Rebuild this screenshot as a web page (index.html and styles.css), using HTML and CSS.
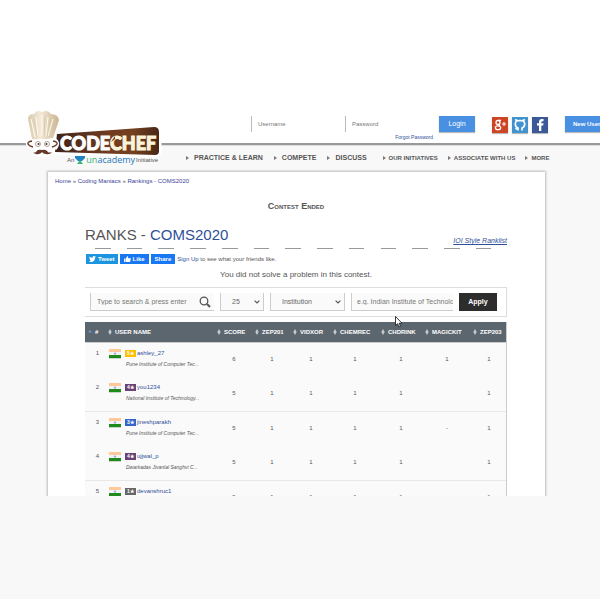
FILE: index.html
```html
<!DOCTYPE html>
<html lang="en">
<head>
<meta charset="utf-8">
<title>Ranks - COMS2020 | CodeChef</title>
<link rel="stylesheet" href="styles.css">
</head>
<body>
<svg class="defs" aria-hidden="true">
  <symbol id="sort" viewBox="0 0 4 7"><path d="M2 0 4 3.500 2 7 0 3.500z" fill="#c3c8cb"/></symbol>
  <symbol id="sort-up" viewBox="0 0 4 7"><path d="M2 1 4 4H0z" fill="#7f8fe0"/></symbol>
  <symbol id="chev" viewBox="0 0 6 4"><path d="M.6.6 3 3 5.400.6" fill="none" stroke="#555" stroke-width="1.1"/></symbol>
  <symbol id="flag" viewBox="0 0 12 10"><path d="M0 0h12v10H0z" fill="#f1f2f5"/><path d="M0 0h12v3H0z" fill="#ffc896"/><path d="M0 6h12v3H0z" fill="#1f8a1c"/><path d="M0 9h12v1H0z" fill="#c9d3c9"/><circle cx="6" cy="4.600" r="1.200" fill="#a9aed6"/></symbol>
</svg>
<div class="screen">
  <header class="header">
    <a class="logo" href="#" aria-label="CodeChef home">
      <svg viewBox="0 0 140 58" width="140" height="58">
        <defs>
          <linearGradient id="wood" x1="0" x2="1"><stop offset="0" stop-color="#3f2418"/><stop offset=".5" stop-color="#703b20"/><stop offset=".75" stop-color="#74401f"/><stop offset="1" stop-color="#482718"/></linearGradient>
          <linearGradient id="hat" x1="0" x2="1"><stop offset="0" stop-color="#d8c9ac"/><stop offset=".4" stop-color="#f3ead8"/><stop offset="1" stop-color="#c9b490"/></linearGradient>
        </defs>
        <path d="M32 24 129 17q5 0 5 5v19q0 4-4 4L30 42z" fill="url(#wood)" stroke="#fff" stroke-width="5" stroke-linejoin="round"/>
        <path d="M32 24 129 17q5 0 5 5v19q0 4-4 4L30 42z" fill="url(#wood)"/>
        <path d="M5 27Q0 32 4 37q5 1 7 6 8 6 14 0 2-5 6-5 4-6-2-9z" fill="#fff" stroke="#fff" stroke-width="3"/>
        <path d="M7 29 3 9Q3 4 9 4q3-5 8-2 6-3 9 2 7 0 8 6-3 9-6 18-10 2-21 1z" fill="url(#hat)"/>
        <path d="m6 9 4 18M11 7l2 19M17 5v21M23 7l-2 19M28 9l-5 17" fill="none" stroke="#fffaf0" stroke-width="1"/>
        <path d="m9 9 3 18M20 6l-1 20M26 8l-4 18" fill="none" stroke="#d2c3a4" stroke-width=".700"/>
        <path d="M7 31q-5 1-4 3t5 3M28 31q5 1 4 3t-5 3" fill="none" stroke="#6c3b28" stroke-width="1.400"/>
        <circle cx="13" cy="34" r="2.500" fill="#fff" stroke="#a08a7a" stroke-width=".800"/><circle cx="22" cy="34" r="2.500" fill="#fff" stroke="#a08a7a" stroke-width=".800"/>
        <circle cx="13.500" cy="34" r="1" fill="#4b2a20"/><circle cx="21.500" cy="34" r="1" fill="#4b2a20"/>
        <path d="M17 40q-5-1-6 2-1 1-3 0 2 3 6 2 3-1 3-2 1 2 4 2 4 1 6-2-3 1-4 0-2-3-6-2z" fill="#65392a"/>
        <text x="35" y="40" class="logo-text">CODE<tspan class="logo-chef">CHEF</tspan></text>
        <path d="m90 26-4 6 4-3z" fill="#68371f"/>
      </svg>
    </a>
    <p class="tagline">An
      <svg viewBox="0 0 10 8" width="10" height="8"><path d="M0 0h10v2L7 5H3L0 2z" fill="#2182c4"/><path d="M5 4 8 8H2z" fill="#35b47c"/></svg>
      <b><span>un</span>academy</b> Initiative</p>
    <form class="login">
      <input class="field" type="text" placeholder="Username" aria-label="Username">
      <div class="pass">
        <input class="field" type="password" placeholder="Password" aria-label="Password">
        <a class="forgot" href="#">Forgot Password</a>
      </div>
      <button class="btn login-btn" type="button">Login</button>
      <div class="social">
        <a href="#" class="google" aria-label="Google"><svg viewBox="0 0 16 16"><g fill="none" stroke="#fff" stroke-width="1.300"><circle cx="6" cy="5.500" r="2"/><ellipse cx="6" cy="10.800" rx="2.700" ry="1.900"/><path d="M6 3.300h3M6.500 7.500l1.500 2"/><path d="M10 7h4M12 5v4" stroke-width="1"/></g></svg></a>
        <a href="#" class="github" aria-label="GitHub"><svg viewBox="0 0 16 16"><path d="M6 13.500v-2.500Q3.300 10 3.300 7q0-1.300.8-2.200L4 3l2 .8q2-.4 4 0l2-.8-.1 1.800q.8.900.8 2.200 0 3-2.700 4v2.500M6 12q-1.500.4-2.500-1" fill="none" stroke="#fff" stroke-width="1.600"/></svg></a>
        <a href="#" class="facebook" aria-label="Facebook"><svg viewBox="0 0 16 16"><path d="M7 14V8.500H5V6.300h2V5q0-3 3-3h1.500v2.200h-1q-1.200 0-1.200 1.100v1h2.200l-.3 2.200H9.300V14z" fill="#fff"/></svg></a>
      </div>
      <button class="btn new-user" type="button">New User</button>
    </form>
  </header>

  <nav class="nav">
    <div class="nav-main"><a href="#">PRACTICE &amp; LEARN</a><a href="#">COMPETE</a><a href="#">DISCUSS</a></div>
    <div class="nav-more"><a href="#">OUR INITIATIVES</a><a href="#">ASSOCIATE WITH US</a><a href="#">MORE</a></div>
  </nav>

  <main class="page">
    <p class="crumbs"><a href="#">Home</a> » <a href="#">Coding Maniacs</a> » <a href="#">Rankings - COMS2020</a></p>
    <h2 class="ended">Contest Ended</h2>
    <div class="content">
      <div class="title">
        <h1>RANKS - <a href="#">COMS2020</a></h1>
        <a class="ioi" href="#">IOI Style Ranklist</a>
      </div>
      <div class="dashes"></div>
      <div class="share">
        <a class="tweet" href="#"><svg viewBox="0 0 8 7" width="7" height="6"><path d="M8 1 7 2Q7 6 3 7 1 7 0 6q1.500 0 2-.7Q1 5 1 4 0 3 .5 2 .3 1 .7.500 2 2 4 2q0-2 1.700-2L7 .500z" fill="#fff"/></svg>Tweet</a>
        <a class="like" href="#"><svg viewBox="0 0 8 7" width="7" height="6"><path d="M0 3h1.500v4H0zM2 3l2-3q1 0 .7 2.500H8L7 7H2z" fill="#fff"/></svg>Like</a>
        <a class="like" href="#">Share</a>
        <p><a href="#">Sign Up</a> to see what your friends like.</p>
      </div>
      <p class="note">You did not solve a problem in this contest.</p>
      <form class="filters">
        <div class="control search">
          <input type="text" placeholder="Type to search &amp; press enter" aria-label="Search">
          <svg viewBox="0 0 12 12" width="12" height="12"><circle cx="5" cy="5" r="3.800" fill="none" stroke="#555" stroke-width="1.300"/><path d="m8 8 3 3" stroke="#555" stroke-width="2"/></svg>
        </div>
        <div class="control"><select aria-label="Rows"><option>25</option></select><svg class="chev"><use href="#chev"/></svg></div>
        <div class="control"><select aria-label="Filter by"><option>Institution</option></select><svg class="chev"><use href="#chev"/></svg></div>
        <div class="control inst"><input type="text" placeholder="e.g. Indian Institute of Technology" aria-label="Institution"></div>
        <button class="apply" type="button">Apply</button>
      </form>
      <table class="ranks">
        <colgroup><col class="c-rank"><col><col class="c-38"><col class="c-38"><col class="c-40"><col class="c-48"><col class="c-44"><col class="c-48"><col class="c-36"></colgroup>
        <thead><tr>
          <th><svg><use href="#sort-up"/></svg>#</th>
          <th><svg><use href="#sort"/></svg>USER NAME</th>
          <th><svg><use href="#sort"/></svg>SCORE</th>
          <th><svg><use href="#sort"/></svg>ZEP201</th>
          <th><svg><use href="#sort"/></svg>VIDXOR</th>
          <th><svg><use href="#sort"/></svg>CHEMREC</th>
          <th><svg><use href="#sort"/></svg>CHDRINK</th>
          <th><svg><use href="#sort"/></svg>MAGICKIT</th>
          <th><svg><use href="#sort"/></svg>ZEP203</th>
        </tr></thead>
        <tbody>
          <tr><td>1</td><td><div class="user"><svg><use href="#flag"/></svg><span class="star s5">5★</span><a href="#">ashley_27</a><em>Pune Institute of Computer Tec...</em></div></td><td>6</td><td>1</td><td>1</td><td>1</td><td>1</td><td>1</td><td>1</td></tr>
          <tr><td>2</td><td><div class="user"><svg><use href="#flag"/></svg><span class="star s4">4★</span><a href="#">you1234</a><em>National Institute of Technology...</em></div></td><td>5</td><td>1</td><td>1</td><td>1</td><td>1</td><td></td><td>1</td></tr>
          <tr><td>3</td><td><div class="user"><svg><use href="#flag"/></svg><span class="star s3">3★</span><a href="#">jineshparakh</a><em>Pune Institute of Computer Tec...</em></div></td><td>5</td><td>1</td><td>1</td><td>1</td><td>1</td><td>-</td><td>1</td></tr>
          <tr><td>4</td><td><div class="user"><svg><use href="#flag"/></svg><span class="star s4">4★</span><a href="#">ujjwal_p</a><em>Dwarkadas Jivanlal Sanghvi C...</em></div></td><td>5</td><td>1</td><td>1</td><td>1</td><td>1</td><td></td><td>1</td></tr>
          <tr><td>5</td><td><div class="user"><svg><use href="#flag"/></svg><span class="star s1">1★</span><a href="#">devanshruc1</a></div></td><td>5</td><td>1</td><td>1</td><td>1</td><td>1</td><td></td><td>1</td></tr>
        </tbody>
      </table>
    </div>
  </main>
</div>
<svg class="cursor" viewBox="0 0 8 12" width="8" height="12" aria-hidden="true"><path d="M.5.500v9L2.600 7.700 4 11l1.500-.6L4.200 7.200H7z" fill="#fff" stroke="#222" stroke-width=".900"/></svg>
</body>
</html>
```
FILE: styles.css
```css
* { box-sizing: border-box; }
body {
  margin: 0;
  background: #f8f8f8;
  color: #555;
  font-family: "Liberation Sans", Arial, sans-serif;
  font-size: 6px;
  line-height: 8px;
  overflow: hidden;
}
h1, h2, p { margin: 0; font-weight: normal; }
a { color: #2f4f98; text-decoration: none; }
svg { flex: none; }
input, select, button { font: inherit; border: 0; border-radius: 0; margin: 0; padding: 0; }
.defs { position: absolute; width: 0; height: 0; }
.screen { height: calc(100vh - 103px); overflow: hidden; }

/* Header */
.header {
  position: relative;
  padding: 116px 0 10px 251px;
  background: #fff;
  border-bottom: 2px solid #999;
}
.logo { position: absolute; left: 25px; top: 110px; line-height: 0; }
.logo-text { font: 900 18px/20px Lato, sans-serif; fill: #fff; stroke: #fff; stroke-width: 1px; }
.logo-chef { fill: #fbf3d8; stroke: #fbf3d8; }
.tagline {
  position: absolute;
  left: 67px;
  top: 155px;
  display: flex;
  align-items: center;
  gap: 1px;
  font-size: 6px;
  line-height: 10px;
  white-space: nowrap;
}
.tagline b { font: 9px/10px "Open Sans", sans-serif; color: #2677b8; }
.tagline span { color: #35b47c; }
.login { display: flex; align-items: flex-start; height: 17px; }
.login > * { flex: none; }
.field {
  width: 88px;
  height: 16px;
  padding-left: 6px;
  border-left: 1px solid #bbb;
  background: #fff;
}
::placeholder { color: #777; opacity: 1; }
.pass { margin-left: 6px; width: 88px; text-align: right; }
.forgot { display: block; margin-top: 1px; font-size: 5px; }
.btn { background: #4a90e2; color: #fff; height: 16px; box-shadow: 0 1px 1px #bbb; }
.login-btn { margin-left: 6px; width: 36px; font-size: 7px; }
.social { display: flex; gap: 4px; margin: 1px 0 0 17px; }
.social a { width: 16px; height: 16px; box-shadow: 0 1px 1px #bbb; }
.social svg { display: block; width: 16px; height: 16px; }
.google { background: #cd4525; }
.github { background: #4292cf; }
.facebook { background: #3b5998; }
.new-user { margin-left: 17px; width: 56px; padding-left: 8px; text-align: left; font-weight: bold; }

/* Navigation */
.nav { display: flex; padding: 7px 0 9px 186px; line-height: 10px; border-top: 1px solid #ddd; white-space: nowrap; }
.nav a { display: flex; align-items: center; color: #555; font-weight: bold; }
.nav a::before {
  content: "";
  border-left: 3px solid #777;
  border-top: 2px solid transparent;
  border-bottom: 2px solid transparent;
  margin-right: 5px;
}
.nav-main { display: flex; gap: 11px; font-size: 7px; }
.nav-more { display: flex; gap: 10px; margin-left: 16px; font-size: 6px; }
.nav-more a::before { margin-right: 3px; }

/* Page */
.page {
  margin: 0 55px 0 48px;
  padding: 5px 38px 20px 37px;
  background: #fff;
  box-shadow: 0 0 2px 1px #bbb;
}
.crumbs { margin-left: -30px; }
.crumbs a { color: #3a3f98; }
.ended { margin: 16px 0 14px; text-align: center; font: small-caps bold 9px/10px "Liberation Sans", sans-serif; }
.title { display: flex; justify-content: space-between; align-items: flex-end; }
.title h1 { font-size: 15px; line-height: 20px; }
.ioi { font-size: 7px; font-style: italic; text-decoration: underline; }
.dashes {
  height: 1px;
  margin: 3px 0 5px 10px;
  background: repeating-linear-gradient(90deg, #999 0 3.8%, transparent 3.8% 7.7%);
}
.share { display: flex; align-items: center; gap: 2px; height: 10px; padding-left: 1px; white-space: nowrap; }
.share > a {
  display: flex;
  align-items: center;
  gap: 2px;
  height: 10px;
  padding: 0 3px;
  color: #fff;
  font-weight: bold;
}
.share .tweet { background: #1b95e0; }
.share .like { background: #1877f2; padding: 0 4px; }
.note { margin: 6px 0 7px; text-align: center; font-size: 8px; line-height: 10px; }

/* Filters */
.filters {
  display: grid;
  grid-template-columns: 124fr 44fr 75fr 102fr 38fr;
  column-gap: 6px;
  padding: 5px 9px 5px 5px;
  border: 1px solid #ddd;
  border-width: 1px 1px 1px 0;
  font-size: 7px;
}
.control {
  position: relative;
  display: flex;
  align-items: center;
  min-width: 0;
  height: 18px;
  padding: 0 3px 0 6px;
  background: #fafafa;
  border: 1px solid #ccc;
  border-width: 0 1px 1px;
}
.control input, .control select { width: 100%; min-width: 0; height: 16px; background: none; color: #666; appearance: none; }
.control select { padding-left: 5px; }
.chev { position: absolute; right: 3px; top: 7px; width: 6px; height: 4px; }
.search { border-right: 0; }
.inst { padding: 0 0 0 5px; border-right: 0; }
.apply { height: 18px; background: #2d2d2d; color: #fff; font-weight: bold; }

/* Rank table */
.ranks {
  width: 100%;
  margin-top: 5px;
  table-layout: fixed;
  border-collapse: separate;
  border-spacing: 0;
  background: #fafafa;
  border-right: 1px solid #ccc;
}
.c-rank { width: 20px; }
.c-36 { width: 36px; }
.c-38 { width: 38px; }
.c-40 { width: 40px; }
.c-44 { width: 44px; }
.c-48 { width: 48px; }
.ranks th {
  height: 21px;
  padding: 0 0 0 3px;
  background: #5b666e;
  border-bottom: 1px solid #ccc;
  color: #fff;
  text-align: left;
  white-space: nowrap;
}
.ranks th svg { width: 4px; height: 6px; margin-right: 3px; vertical-align: middle; }
.ranks td { height: 34px; padding: 0 0 2px 2px; text-align: center; vertical-align: middle; }
.ranks tr:nth-child(even) td { height: 35px; border-bottom: 1px solid #e8e8e8; }
.ranks td:first-child { padding: 6px 0 0 5px; vertical-align: top; }
.ranks td:nth-child(2) { padding: 6px 0 0; vertical-align: top; }
.user {
  display: grid;
  grid-template-columns: 12px 11px 1fr;
  column-gap: 4px;
  row-gap: 2px;
  margin-left: 4px;
  text-align: left;
}
.user svg { width: 12px; height: 10px; }
.user a { margin-left: -3px; }
.star { height: 7px; margin-top: 1px; color: #fff; font-size: 5px; line-height: 7px; font-weight: bold; text-align: center; }
.s5 { background: #ffbf00; }
.s4 { background: #684273; }
.s3 { background: #3366cc; }
.s1 { background: #666; }
.user em { grid-column: 2 / 4; margin-left: 1px; font-size: 5px; line-height: 6px; white-space: nowrap; }
.cursor { position: absolute; left: 395px; top: 316px; }
```
